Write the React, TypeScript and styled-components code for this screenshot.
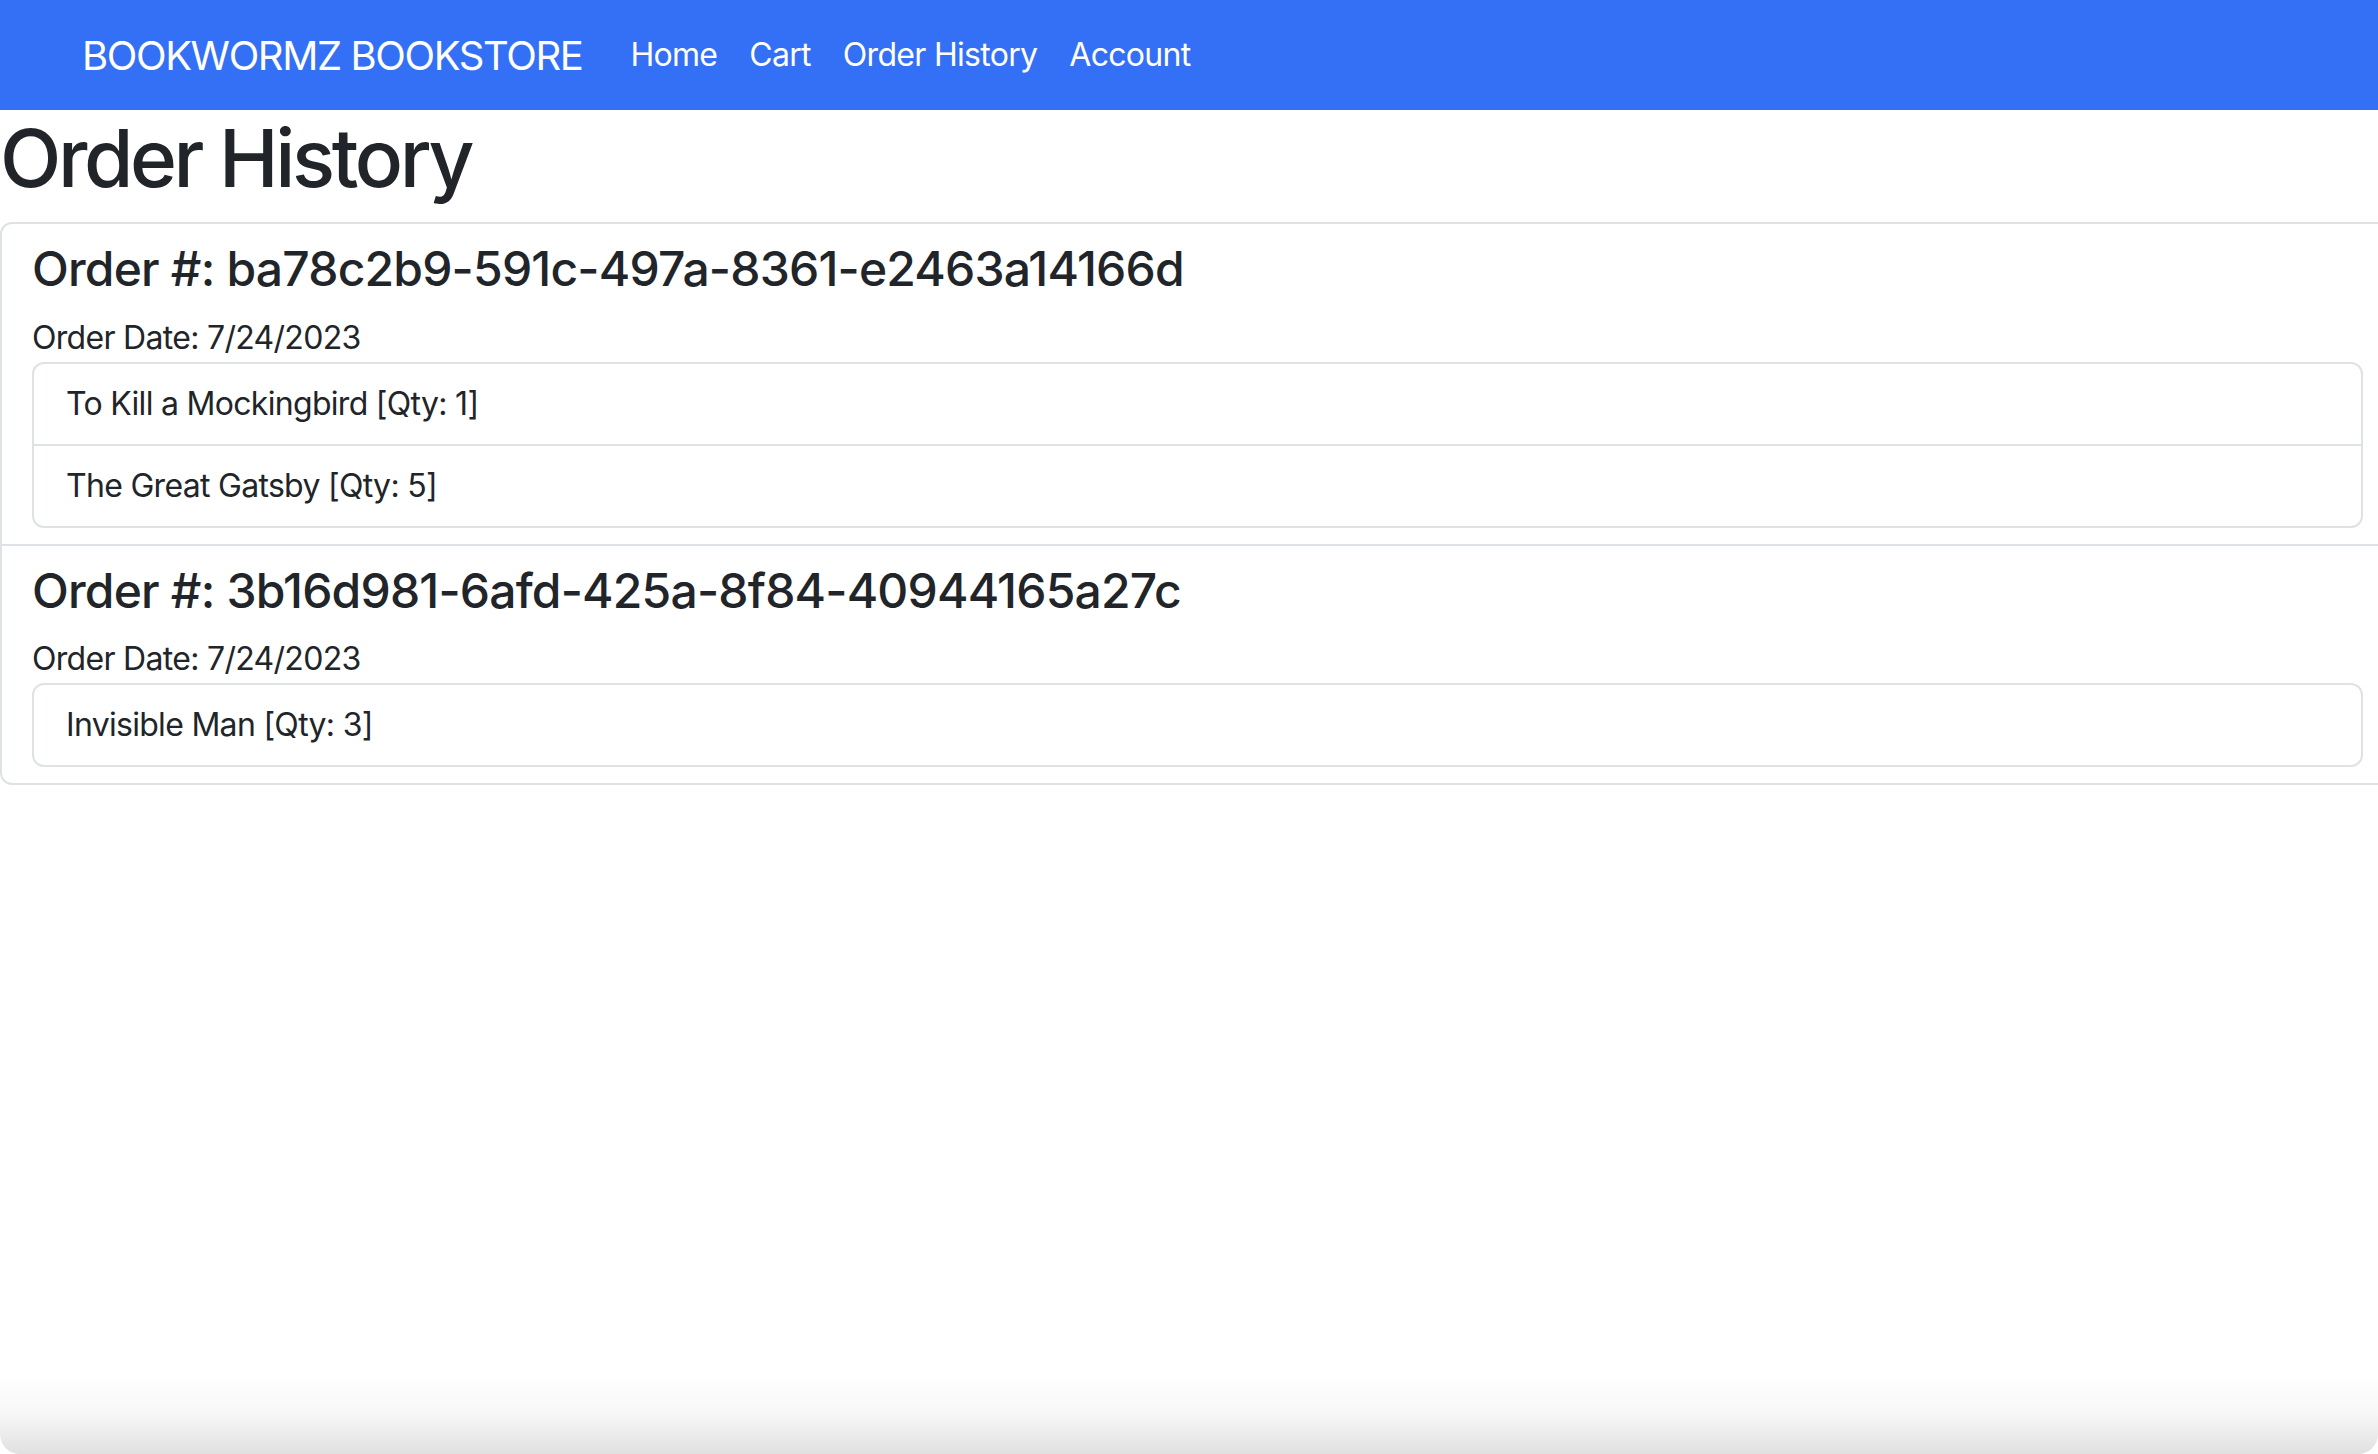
import React from "react";
import styled, { createGlobalStyle } from "styled-components";

const GlobalStyle = createGlobalStyle`
  html, body {
    margin: 0;
    padding: 0;
    background: #ffffff;
    overflow: hidden;
  }
  body {
    font-family: Inter, "Liberation Sans", Arial, sans-serif;
    color: #212529;
  }
  * { box-sizing: border-box; }
`;

const Page = styled.div`
  width: 2378px;
  height: 1454px;
  overflow: hidden;
  position: relative;
`;

const Navbar = styled.nav`
  height: 110px;
  background: #3470f5;
  display: flex;
  align-items: center;
  padding-left: 82px;
`;

const Brand = styled.a`
  font-size: 40px;
  letter-spacing: -1.4px;
  color: #ffffff;
  margin-right: 32px;
  text-decoration: none;
`;

const NavList = styled.ul`
  display: flex;
  list-style: none;
  margin: 0;
  padding: 0;
`;

const NavLink = styled.a`
  display: block;
  padding: 0 16px;
  font-size: 32px;
  letter-spacing: -0.7px;
  line-height: 48px;
  color: #ffffff;
  text-decoration: none;
`;

const Title = styled.h1`
  font-size: 80px;
  font-weight: 500;
  letter-spacing: -3.4px;
  line-height: 1.2;
  margin: 0 0 16px;
`;

const OrderList = styled.ul`
  list-style: none;
  margin: 0;
  padding: 0;
  width: calc(100% + 19px);
  border: 2px solid #dee2e6;
  border-radius: 12px;
`;

const OrderItem = styled.li`
  padding: 16px 32px 16px 30px;
  & + & {
    border-top: 2px solid #dee2e6;
  }
`;

const OrderTitle = styled.h4`
  font-size: 48px;
  font-weight: 500;
  letter-spacing: -0.8px;
  line-height: 1.2;
  margin: 0 0 16px;
`;

const OrderDate = styled.div`
  font-size: 32px;
  letter-spacing: -0.7px;
  line-height: 48px;
`;

const BookList = styled.ul`
  list-style: none;
  margin: 0;
  padding: 0;
  border: 2px solid #dee2e6;
  border-radius: 12px;
`;

const BookItem = styled.li`
  padding: 16px 32px;
  font-size: 32px;
  letter-spacing: -0.7px;
  line-height: 48px;
  & + & {
    border-top: 2px solid #dee2e6;
  }
`;

const WindowShade = styled.div`
  position: absolute;
  left: 0;
  right: 0;
  bottom: 0;
  height: 80px;
  pointer-events: none;
  background: linear-gradient(to bottom, rgba(0, 0, 0, 0) 0%, rgba(0, 0, 0, 0.03) 50%, rgba(0, 0, 0, 0.12) 100%);
  border-bottom-left-radius: 20px;
  border-bottom-right-radius: 20px;
`;

const orders = [
  {
    id: "ba78c2b9-591c-497a-8361-e2463a14166d",
    date: "7/24/2023",
    items: [
      { title: "To Kill a Mockingbird", qty: 1 },
      { title: "The Great Gatsby", qty: 5 },
    ],
  },
  {
    id: "3b16d981-6afd-425a-8f84-40944165a27c",
    date: "7/24/2023",
    items: [{ title: "Invisible Man", qty: 3 }],
  },
];

export default function App() {
  return (
    <Page>
      <GlobalStyle />
      <Navbar>
        <Brand>BOOKWORMZ BOOKSTORE</Brand>
        <NavList>
          <li><NavLink>Home</NavLink></li>
          <li><NavLink>Cart</NavLink></li>
          <li><NavLink>Order History</NavLink></li>
          <li><NavLink>Account</NavLink></li>
        </NavList>
      </Navbar>
      <Title>Order History</Title>
      <OrderList>
        {orders.map((o) => (
          <OrderItem key={o.id}>
            <OrderTitle>Order #: {o.id}</OrderTitle>
            <OrderDate>Order Date: {o.date}</OrderDate>
            <BookList>
              {o.items.map((b) => (
                <BookItem key={b.title}>
                  {b.title} [Qty: {b.qty}]
                </BookItem>
              ))}
            </BookList>
          </OrderItem>
        ))}
      </OrderList>
      <WindowShade />
    </Page>
  );
}
